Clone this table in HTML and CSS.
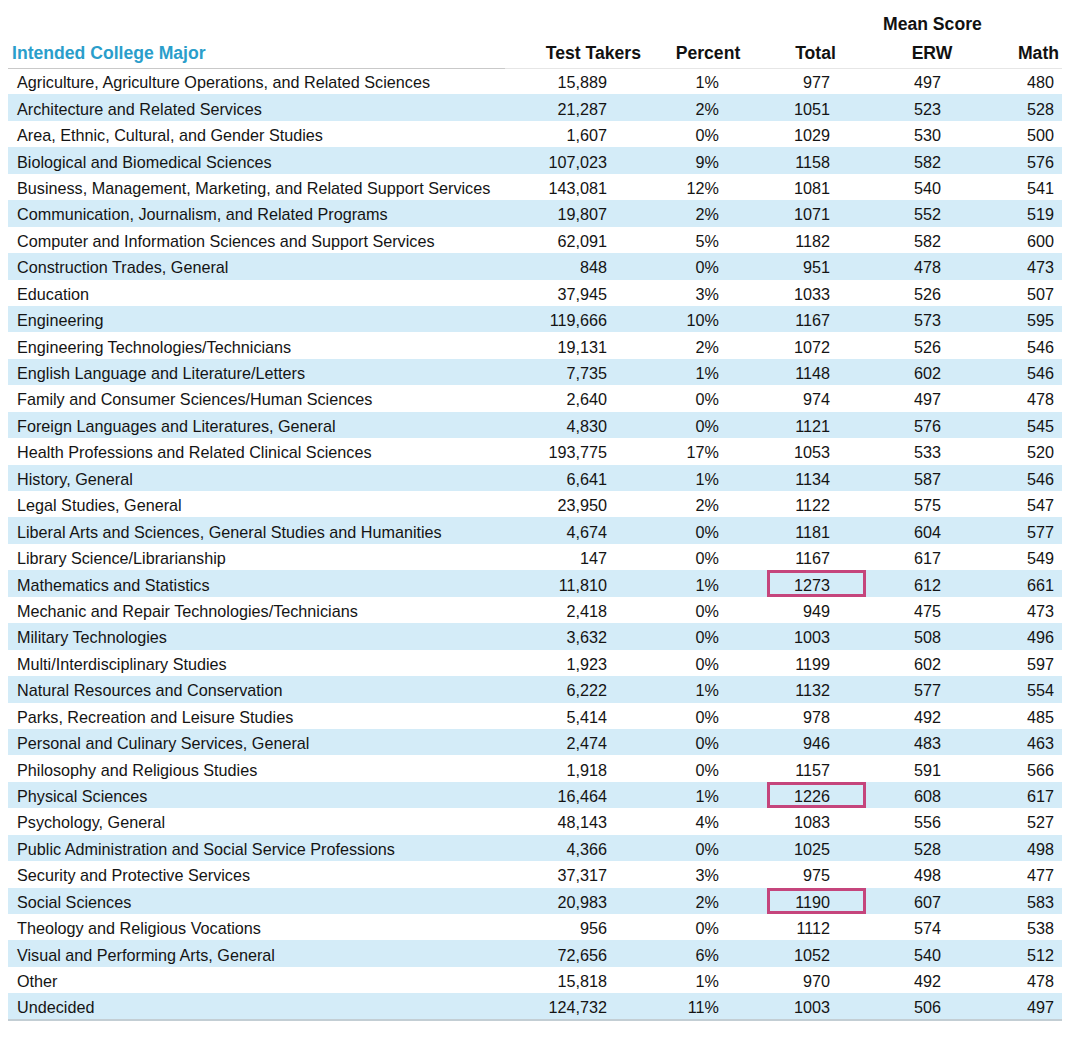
FILE: index.html
```html
<!DOCTYPE html>
<html>
<head>
<meta charset="utf-8">
<link rel="stylesheet" href="styles.css">
</head>
<body>
<table class="scores">
  <colgroup>
    <col class="c-major"><col class="c-takers"><col class="c-pct"><col class="c-total"><col class="c-erw"><col class="c-math">
  </colgroup>
  <thead>
    <tr class="h-top">
      <th></th><th></th><th></th><th></th>
      <th class="h-mean" colspan="2"><span>Mean Score</span></th>
    </tr>
    <tr class="h-main">
      <th class="h-major">Intended College Major</th>
      <th class="h-takers">Test Takers</th>
      <th class="h-pct">Percent</th>
      <th class="h-total">Total</th>
      <th class="h-erw">ERW</th>
      <th class="h-math">Math</th>
    </tr>
  </thead>
  <tbody>
    <tr><td>Agriculture, Agriculture Operations, and Related Sciences</td><td>15,889</td><td>1%</td><td>977</td><td>497</td><td>480</td></tr>
    <tr><td>Architecture and Related Services</td><td>21,287</td><td>2%</td><td>1051</td><td>523</td><td>528</td></tr>
    <tr><td>Area, Ethnic, Cultural, and Gender Studies</td><td>1,607</td><td>0%</td><td>1029</td><td>530</td><td>500</td></tr>
    <tr><td>Biological and Biomedical Sciences</td><td>107,023</td><td>9%</td><td>1158</td><td>582</td><td>576</td></tr>
    <tr><td>Business, Management, Marketing, and Related Support Services</td><td>143,081</td><td>12%</td><td>1081</td><td>540</td><td>541</td></tr>
    <tr><td>Communication, Journalism, and Related Programs</td><td>19,807</td><td>2%</td><td>1071</td><td>552</td><td>519</td></tr>
    <tr><td>Computer and Information Sciences and Support Services</td><td>62,091</td><td>5%</td><td>1182</td><td>582</td><td>600</td></tr>
    <tr><td>Construction Trades, General</td><td>848</td><td>0%</td><td>951</td><td>478</td><td>473</td></tr>
    <tr><td>Education</td><td>37,945</td><td>3%</td><td>1033</td><td>526</td><td>507</td></tr>
    <tr><td>Engineering</td><td>119,666</td><td>10%</td><td>1167</td><td>573</td><td>595</td></tr>
    <tr><td>Engineering Technologies/Technicians</td><td>19,131</td><td>2%</td><td>1072</td><td>526</td><td>546</td></tr>
    <tr><td>English Language and Literature/Letters</td><td>7,735</td><td>1%</td><td>1148</td><td>602</td><td>546</td></tr>
    <tr><td>Family and Consumer Sciences/Human Sciences</td><td>2,640</td><td>0%</td><td>974</td><td>497</td><td>478</td></tr>
    <tr><td>Foreign Languages and Literatures, General</td><td>4,830</td><td>0%</td><td>1121</td><td>576</td><td>545</td></tr>
    <tr><td>Health Professions and Related Clinical Sciences</td><td>193,775</td><td>17%</td><td>1053</td><td>533</td><td>520</td></tr>
    <tr><td>History, General</td><td>6,641</td><td>1%</td><td>1134</td><td>587</td><td>546</td></tr>
    <tr><td>Legal Studies, General</td><td>23,950</td><td>2%</td><td>1122</td><td>575</td><td>547</td></tr>
    <tr><td>Liberal Arts and Sciences, General Studies and Humanities</td><td>4,674</td><td>0%</td><td>1181</td><td>604</td><td>577</td></tr>
    <tr><td>Library Science/Librarianship</td><td>147</td><td>0%</td><td>1167</td><td>617</td><td>549</td></tr>
    <tr><td>Mathematics and Statistics</td><td>11,810</td><td>1%</td><td class="hl">1273</td><td>612</td><td>661</td></tr>
    <tr><td>Mechanic and Repair Technologies/Technicians</td><td>2,418</td><td>0%</td><td>949</td><td>475</td><td>473</td></tr>
    <tr><td>Military Technologies</td><td>3,632</td><td>0%</td><td>1003</td><td>508</td><td>496</td></tr>
    <tr><td>Multi/Interdisciplinary Studies</td><td>1,923</td><td>0%</td><td>1199</td><td>602</td><td>597</td></tr>
    <tr><td>Natural Resources and Conservation</td><td>6,222</td><td>1%</td><td>1132</td><td>577</td><td>554</td></tr>
    <tr><td>Parks, Recreation and Leisure Studies</td><td>5,414</td><td>0%</td><td>978</td><td>492</td><td>485</td></tr>
    <tr><td>Personal and Culinary Services, General</td><td>2,474</td><td>0%</td><td>946</td><td>483</td><td>463</td></tr>
    <tr><td>Philosophy and Religious Studies</td><td>1,918</td><td>0%</td><td>1157</td><td>591</td><td>566</td></tr>
    <tr><td>Physical Sciences</td><td>16,464</td><td>1%</td><td class="hl">1226</td><td>608</td><td>617</td></tr>
    <tr><td>Psychology, General</td><td>48,143</td><td>4%</td><td>1083</td><td>556</td><td>527</td></tr>
    <tr><td>Public Administration and Social Service Professions</td><td>4,366</td><td>0%</td><td>1025</td><td>528</td><td>498</td></tr>
    <tr><td>Security and Protective Services</td><td>37,317</td><td>3%</td><td>975</td><td>498</td><td>477</td></tr>
    <tr><td>Social Sciences</td><td>20,983</td><td>2%</td><td class="hl">1190</td><td>607</td><td>583</td></tr>
    <tr><td>Theology and Religious Vocations</td><td>956</td><td>0%</td><td>1112</td><td>574</td><td>538</td></tr>
    <tr><td>Visual and Performing Arts, General</td><td>72,656</td><td>6%</td><td>1052</td><td>540</td><td>512</td></tr>
    <tr><td>Other</td><td>15,818</td><td>1%</td><td>970</td><td>492</td><td>478</td></tr>
    <tr><td>Undecided</td><td>124,732</td><td>11%</td><td>1003</td><td>506</td><td>497</td></tr>
  </tbody>
</table>
</body>
</html>
```

FILE: styles.css
```css
html, body {
  margin: 0;
  padding: 0;
  background: #ffffff;
}

body {
  padding: 8px 0 0 8px;
  font-family: "Liberation Sans", Arial, sans-serif;
  color: #141414;
}

.scores {
  border-collapse: collapse;
  table-layout: fixed;
  width: 1054px;
  font-size: 16.2px;
}

.c-major { width: 497px; }
.c-takers { width: 150px; }
.c-pct { width: 112px; }
.c-total { width: 99px; }
.c-erw { width: 124px; }
.c-math { width: 72px; }

.scores th {
  font-weight: bold;
  font-size: 17.6px;
  color: #111;
  padding: 2px 0 0 0;
  white-space: nowrap;
}

.h-top {
  height: 30px;
}

.h-mean {
  text-align: left;
  vertical-align: middle;
}

.h-mean span {
  display: inline-block;
  margin-left: 17px;
}

.h-main {
  height: 30px;
}

.h-main th {
  vertical-align: middle;
  border-bottom: 1px solid #e6e6e6;
}

.h-main th.h-major {
  text-align: left;
  color: #2a9ecb;
  padding-left: 4px;
  border-bottom: 1px solid #c9c9c9;
}

.h-takers { text-align: right; padding-right: 14px !important; }
.h-pct { text-align: center; padding-left: 0 !important; padding-right: 6px !important; }
.h-total { text-align: center; padding-right: 2px !important; }
.h-erw { text-align: center; padding-left: 8px !important; }
.h-math { text-align: right; padding-right: 3px !important; }

.scores tbody tr {
  height: 26.45px;
}

.scores tbody tr:nth-child(even) {
  background: #d4ecf8;
}

.scores tbody tr:last-child td {
  border-bottom: 2px solid #c3ced4;
}

.scores td {
  padding: 2px 0 0 0;
  vertical-align: middle;
  text-align: right;
  white-space: nowrap;
  line-height: 18px;
}

.scores td:nth-child(1) { text-align: left; padding-left: 9px; }
.scores td:nth-child(2) { padding-right: 48px; }
.scores td:nth-child(3) { padding-right: 48px; }
.scores td:nth-child(4) { padding-right: 36px; }
.scores td:nth-child(5) { padding-right: 49px; }
.scores td:nth-child(6) { padding-right: 8px; }

.scores td.hl {
  box-shadow: inset 0 0 0 3px #c5457c;
}
```
